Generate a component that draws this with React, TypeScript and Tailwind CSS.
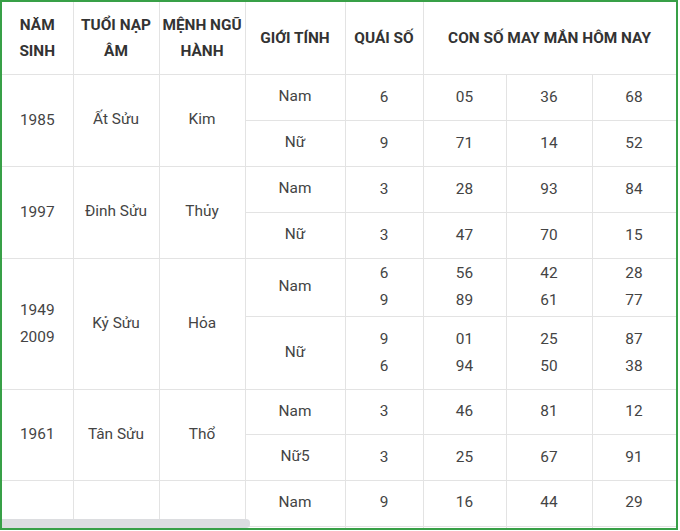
import React from "react"

type Sub = { gender: string; quai: string[]; nums: string[][] }
type Group = { years: string[]; napAm: string; menh: string; subs: Sub[]; heights: number[] }

const groups: Group[] = [
  {
    years: ["1985"], napAm: "Ất Sửu", menh: "Kim", heights: [46, 46],
    subs: [
      { gender: "Nam", quai: ["6"], nums: [["05"], ["36"], ["68"]] },
      { gender: "Nữ", quai: ["9"], nums: [["71"], ["14"], ["52"]] },
    ],
  },
  {
    years: ["1997"], napAm: "Đinh Sửu", menh: "Thủy", heights: [46, 46],
    subs: [
      { gender: "Nam", quai: ["3"], nums: [["28"], ["93"], ["84"]] },
      { gender: "Nữ", quai: ["3"], nums: [["47"], ["70"], ["15"]] },
    ],
  },
  {
    years: ["1949", "2009"], napAm: "Kỷ Sửu", menh: "Hỏa", heights: [58, 73],
    subs: [
      { gender: "Nam", quai: ["6", "9"], nums: [["56", "89"], ["42", "61"], ["28", "77"]] },
      { gender: "Nữ", quai: ["9", "6"], nums: [["01", "94"], ["25", "50"], ["87", "38"]] },
    ],
  },
  {
    years: ["1961"], napAm: "Tân Sửu", menh: "Thổ", heights: [45, 46],
    subs: [
      { gender: "Nam", quai: ["3"], nums: [["46"], ["81"], ["12"]] },
      { gender: "Nữ5", quai: ["3"], nums: [["25"], ["67"], ["91"]] },
    ],
  },
]

const cell = "border-r border-b border-[#e3e3e3] text-center align-middle p-0"

function Lines({ items }: { items: string[] }) {
  return (
    <div className="flex flex-col items-center leading-[27px]">
      {items.map((t, i) => <span key={i}>{t}</span>)}
    </div>
  )
}

export default function App() {
  return (
    <div className="w-[678px] h-[530px] border-2 border-[#38a047] bg-white overflow-hidden relative" style={{ fontFamily: "Roboto, 'Liberation Sans', sans-serif" }}>
      <table className="table-fixed border-collapse w-[674px] text-[15.4px] text-[#444]">
        <colgroup>
          <col className="w-[71px]" />
          <col className="w-[86px]" />
          <col className="w-[86px]" />
          <col className="w-[100px]" />
          <col className="w-[78px]" />
          <col className="w-[83px]" />
          <col className="w-[86px]" />
          <col className="w-[84px]" />
        </colgroup>
        <thead>
          <tr className="h-[72px] font-bold text-[#333] leading-[26px]">
            <th className={cell}>NĂM<br />SINH</th>
            <th className={cell}>TUỔI NẠP<br />ÂM</th>
            <th className={cell}>MỆNH NGŨ<br />HÀNH</th>
            <th className={cell}>GIỚI TÍNH</th>
            <th className={cell}>QUÁI SỐ</th>
            <th className={cell} colSpan={3}>CON SỐ MAY MẮN HÔM NAY</th>
          </tr>
        </thead>
        <tbody>
          {groups.map((g) =>
            g.subs.map((s, i) => (
              <tr key={g.years[0] + i} style={{ height: g.heights[i] }}>
                {i === 0 && (
                  <>
                    <td className={cell} rowSpan={2}><Lines items={g.years} /></td>
                    <td className={cell} rowSpan={2}>{g.napAm}</td>
                    <td className={cell} rowSpan={2}>{g.menh}</td>
                  </>
                )}
                <td className={cell}>{s.gender}</td>
                <td className={cell}><Lines items={s.quai} /></td>
                {s.nums.map((n, j) => (
                  <td key={j} className={cell}><Lines items={n} /></td>
                ))}
              </tr>
            ))
          )}
          <tr className="h-[46px]">
            <td className={cell} />
            <td className={cell} />
            <td className={cell} />
            <td className={cell}>Nam</td>
            <td className={cell}>9</td>
            <td className={cell}>16</td>
            <td className={cell}>44</td>
            <td className={cell}>29</td>
          </tr>
          <tr className="h-[46px]">
            <td className={cell} />
            <td className={cell} />
            <td className={cell} />
            <td className={cell} />
            <td className={cell} />
            <td className={cell} />
            <td className={cell} />
            <td className={cell} />
          </tr>
        </tbody>
      </table>
      <div className="absolute left-0 bottom-0 w-[248px] h-[9px] bg-[#dcdde0] rounded-r-sm" />
    </div>
  )
}
